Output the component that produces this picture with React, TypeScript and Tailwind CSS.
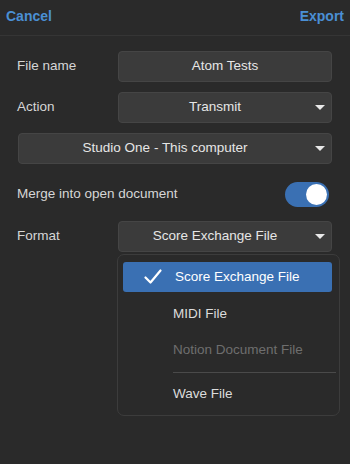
import React from 'react';

const Caret = () => (
  <svg width="10" height="6" viewBox="0 0 10 6" className="absolute right-[6px] top-1/2 -translate-y-1/2">
    <path d="M0 0 H10 L5 5 Z" fill="#e8e8e8" />
  </svg>
);

const Field: React.FC<{ value: string; caret?: boolean; className?: string }> = ({ value, caret, className }) => (
  <div
    className={`relative flex h-[31px] items-center justify-center rounded-[4px] border border-[#454545] bg-[#3b3b3b] text-[13.5px] text-[#e6e6e6] ${caret ? 'pr-[20px]' : ''} ${className ?? ''}`}
  >
    {value}
    {caret && <Caret />}
  </div>
);

const Row: React.FC<{ label: string; children: React.ReactNode }> = ({ label, children }) => (
  <div className="flex items-center">
    <div className="w-[101px] text-[13.5px] text-[#d6d6d6]">{label}</div>
    <div className="flex-1">{children}</div>
  </div>
);

export default function App() {
  return (
    <div
      className="relative h-[464px] w-[350px] overflow-hidden bg-[#2a2a2a]"
      style={{ fontFamily: '"Liberation Sans", Arial, sans-serif' }}
    >
      {/* header */}
      <div className="flex h-[36px] items-center justify-between border-b border-[#353535] px-[6px] pb-[3px] text-[14px] font-bold text-[#4a8fd4]">
        <span>Cancel</span>
        <span>Export</span>
      </div>

      <div className="flex flex-col gap-[10px] pl-[17px] pr-[18px] pt-[15px]">
        <Row label="File name">
          <Field value="Atom Tests" />
        </Row>
        <Row label="Action">
          <Field value="Transmit" caret />
        </Row>
        <Field value="Studio One - This computer" caret className="ml-[1px]" />

        <div className="mt-[8px] flex items-center justify-between">
          <span className="text-[13.5px] text-[#d6d6d6]">Merge into open document</span>
          <div className="mr-[3px] flex h-[25px] w-[44px] items-center justify-end rounded-full bg-[#3a70b3] px-[2px]">
            <div className="h-[21px] w-[21px] rounded-full bg-white" />
          </div>
        </div>

        <div className="mt-[4px]">
          <Row label="Format">
            <Field value="Score Exchange File" caret />
          </Row>
        </div>
      </div>

      {/* dropdown menu */}
      <div className="absolute left-[117px] top-[254px] h-[162px] w-[223px] rounded-[7px] border border-[#3c3c3c] bg-[#2a2a2a] pt-[7px] text-[13.5px]">
        <div className="mx-[5px] flex h-[30px] w-[209px] items-center rounded-[3px] bg-[#3a70b3] text-white">
          <svg width="18" height="16" viewBox="0 0 18 16" className="ml-[21px] mr-[13px]">
            <path d="M1.5 8.5 L6.5 13.5 L16.5 1.5" fill="none" stroke="white" strokeWidth="2.2" strokeLinecap="round" strokeLinejoin="round" />
          </svg>
          Score Exchange File
        </div>
        <div className="mt-[4px] flex h-[36px] items-center pl-[55px] text-[#dcdcdc]">MIDI File</div>
        <div className="flex h-[36px] items-center pl-[55px] text-[#6e6e6e]">Notion Document File</div>
        <div className="ml-[55px] mr-[3px] mt-[4px] border-t border-[#4a4a4a]" />
        <div className="flex h-[42px] items-center pl-[55px] text-[#dcdcdc]">Wave File</div>
      </div>
    </div>
  );
}
